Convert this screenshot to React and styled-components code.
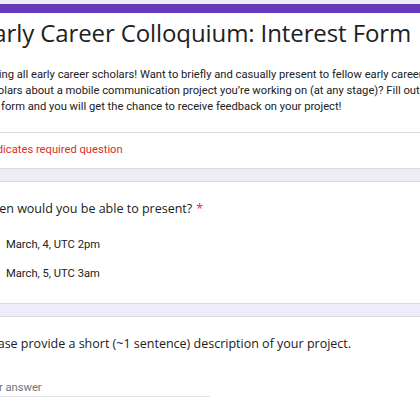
import React from 'react'
import styled, { createGlobalStyle } from 'styled-components'

const GlobalStyle = createGlobalStyle`
    html, body {
        margin: 0;
        padding: 0;
        background: #f0ebf8;
        overflow: hidden;
    }
    body {
        font-family: Roboto, "Liberation Sans", sans-serif;
        color: #202124;
    }
`

const Page = styled.div`
    width: 500px;
    margin-left: -40px;
    padding-top: 4px;
    display: flex;
    flex-direction: column;
    gap: 12px;
`

const Card = styled.div`
    background: #fff;
    border: 1px solid #dadce0;
    border-radius: 8px;
    ${ ({ accent }) => accent && `
        border-top: 9px solid #673ab7;
    ` }
`

// Header

const HeaderBody = styled.div`
    padding: 4px 19px 17px;
`

const Title = styled.h1`
    margin: 0;
    font-family: "Open Sans", Roboto, sans-serif;
    font-weight: 400;
    font-size: 24px;
    line-height: 32px;
    letter-spacing: -0.1px;
`

const Description = styled.p`
    margin: 18px 0 0;
    font-size: 11.2px;
    line-height: 16px;
    white-space: pre-line;
`

const RequiredNote = styled.div`
    border-top: 1px solid #dadce0;
    padding: 9px 19px 10px;
    font-size: 11.2px;
    line-height: 16px;
    color: #d93025;
`

// Questions

const QuestionBody = styled.div`
    padding: 17px 19px ${ ({ bottom }) => bottom ?? 15 }px;
`

const QuestionTitle = styled.div`
    font-family: "Open Sans", Roboto, sans-serif;
    font-size: 12.5px;
    line-height: 19px;
    color: #202124;
`

const Star = styled.span`
    color: #d93025;
    margin-left: 4px;
`

const Options = styled.div`
    margin-top: 12px;
    display: flex;
    flex-direction: column;
`

const Option = styled.label`
    display: flex;
    align-items: center;
    gap: 10px;
    height: 29px;
    font-size: 11.2px;
`

const Radio = styled.span`
    width: 16px;
    height: 16px;
    box-sizing: border-box;
    border: 2px solid #5f6368;
    border-radius: 50%;
    flex: none;
`

const AnswerField = styled.div`
    margin-top: 26px;
    width: 230px;
    border-bottom: 1px solid #e3e3e3;
    font-size: 11.2px;
    line-height: 17px;
    color: #70757a;
`

const description = `Calling all early career scholars! Want to briefly and casually present to fellow early career
scholars about a mobile communication project you’re working on (at any stage)? Fill out
this form and you will get the chance to receive feedback on your project!`

export default function App() {
    return (
        <>
            <GlobalStyle />
            <Page>
                <Card accent>
                    <HeaderBody>
                        <Title>Early Career Colloquium: Interest Form</Title>
                        <Description>{ description }</Description>
                    </HeaderBody>
                    <RequiredNote>* Indicates required question</RequiredNote>
                </Card>

                <Card>
                    <QuestionBody>
                        <QuestionTitle>When would you be able to present?<Star>*</Star></QuestionTitle>
                        <Options>
                            <Option><Radio />March, 4, UTC 2pm</Option>
                            <Option><Radio />March, 5, UTC 3am</Option>
                        </Options>
                    </QuestionBody>
                </Card>

                <Card>
                    <QuestionBody bottom={ 24 }>
                        <QuestionTitle>Please provide a short (~1 sentence) description of your project.</QuestionTitle>
                        <AnswerField>Your answer</AnswerField>
                    </QuestionBody>
                </Card>
            </Page>
        </>
    )
}
